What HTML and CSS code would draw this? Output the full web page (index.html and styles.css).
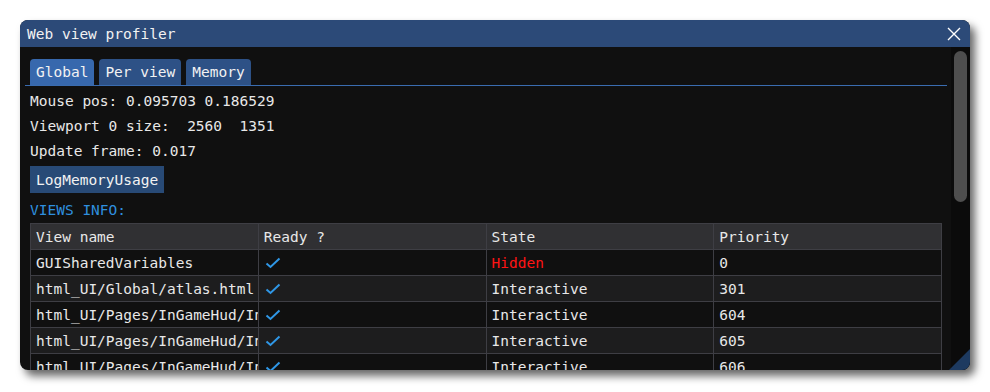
FILE: index.html
```html
<!DOCTYPE html>
<html>
<head>
    <meta charset="utf-8">
    <title> Web view profiler </title>

    <!-- Styling -->
    <link rel="stylesheet" href="styles.css">
</head>
<body>
    <div class="window">
        <div class="titlebar">
            <span class="title">Web view profiler</span>
            <svg class="close" width="14" height="14" viewBox="0 0 14 14">
                <path d="M1 1 L13 13 M13 1 L1 13" stroke="#ffffff" stroke-width="1.4" fill="none"/>
            </svg>
        </div>

        <div class="body">
            <div class="main">
                <div class="tabbar">
                    <span class="tab active">Global</span>
                    <span class="tab">Per view</span>
                    <span class="tab">Memory</span>
                </div>

                <p class="line">Mouse pos: 0.095703 0.186529</p>
                <p class="line">Viewport 0 size:  2560  1351</p>
                <p class="line">Update frame: 0.017</p>
                <button class="btn">LogMemoryUsage</button>
                <p class="line heading">VIEWS INFO:</p>

                <table class="views">
                    <colgroup>
                        <col class="c1"><col class="c2"><col class="c3"><col class="c4">
                    </colgroup>
                    <thead>
                        <tr><th>View name</th><th>Ready ?</th><th>State</th><th>Priority</th></tr>
                    </thead>
                    <tbody>
                        <tr><td>GUISharedVariables</td><td class="ok"><svg class="check" width="16" height="12" viewBox="0 0 16 12"><path d="M1.5 6.5 L5.5 10 L14.5 1.5" stroke="#2f97e6" stroke-width="2" fill="none"/></svg></td><td class="hidden">Hidden</td><td>0</td></tr>
                        <tr><td>html_UI/Global/atlas.html</td><td class="ok"><svg class="check" width="16" height="12" viewBox="0 0 16 12"><path d="M1.5 6.5 L5.5 10 L14.5 1.5" stroke="#2f97e6" stroke-width="2" fill="none"/></svg></td><td>Interactive</td><td>301</td></tr>
                        <tr><td>html_UI/Pages/InGameHud/InGameHud.html</td><td class="ok"><svg class="check" width="16" height="12" viewBox="0 0 16 12"><path d="M1.5 6.5 L5.5 10 L14.5 1.5" stroke="#2f97e6" stroke-width="2" fill="none"/></svg></td><td>Interactive</td><td>604</td></tr>
                        <tr><td>html_UI/Pages/InGameHud/InGameHud.html</td><td class="ok"><svg class="check" width="16" height="12" viewBox="0 0 16 12"><path d="M1.5 6.5 L5.5 10 L14.5 1.5" stroke="#2f97e6" stroke-width="2" fill="none"/></svg></td><td>Interactive</td><td>605</td></tr>
                        <tr><td>html_UI/Pages/InGameHud/InGameHud.html</td><td class="ok"><svg class="check" width="16" height="12" viewBox="0 0 16 12"><path d="M1.5 6.5 L5.5 10 L14.5 1.5" stroke="#2f97e6" stroke-width="2" fill="none"/></svg></td><td>Interactive</td><td>606</td></tr>
                    </tbody>
                </table>
            </div>

            <div class="scrollbar">
                <div class="thumb"></div>
            </div>
        </div>

        <div class="grip"></div>
    </div>
</body>
</html>
```

FILE: styles.css
```css
* {
    box-sizing: border-box;
    font-family: "DejaVu Sans Mono", "Liberation Mono", monospace;
}

:root {
    --white:      #e8e8e8;
    --window:     #101010;
    --title:      #2c4a78;
    --tab:        #2d5186;
    --tab-active: #3768ad;
    --line-blue:  #3a6cb0;
    --sky:        #2f8fdf;
    --red:        #ff1414;
    --grid:       #3e3e44;
    --header:     #303033;
    --stripe:     #1d1d1e;
    --thumb:      #4e4e4e;
}

body {
    margin: 0;
    padding: 20px;
    background-color: #ffffff;
}

.window {
    position: relative;
    width: 950px;
    height: 350px;
    overflow: hidden;

    display: flex;
    flex-direction: column;

    color: var( --white );
    background-color: var( --window );
    border-radius: 8px;
    box-shadow: 5px 6px 9px rgba( 0, 0, 0, 0.6 );
}

.titlebar {
    height: 27px;
    flex: none;

    display: flex;
    align-items: center;
    justify-content: space-between;

    padding: 0 9px 0 7px;
    background-color: var( --title );
}

.title {
    font-size: 14.5px;
    color: #f2f2f2;
}

.body {
    flex: 1;
    min-height: 0;

    display: flex;
}

.main {
    flex: 1;
    min-width: 0;
    padding: 12px 4px 0 5px;
}

.tabbar {
    display: flex;
    gap: 5px;

    height: 27px;
    padding-left: 5px;
    border-bottom: 1px solid var( --line-blue );
}

.tab {
    height: 26px;
    padding: 0 6px;

    display: flex;
    align-items: center;

    font-size: 14.5px;
    color: #f2f2f2;
    background-color: var( --tab );
    border-radius: 4px 4px 0 0;
}

.tab.active {
    background-color: var( --tab-active );
}

.line {
    margin: 0;
    padding-left: 5px;

    height: 25px;
    line-height: 25px;
    font-size: 14.5px;
    white-space: pre;
}

.tabbar + .line {
    margin-top: 3px;
}

.heading {
    color: var( --sky );
}

.btn {
    display: block;
    height: 27px;
    margin: 2px 0 5px 5px;
    padding: 0 6px;

    font-size: 14.5px;
    color: #f2f2f2;
    background-color: #284a76;
    border: none;
}

.views {
    width: 912px;
    margin: 0 0 0 5px;

    table-layout: fixed;
    border-collapse: collapse;
    font-size: 14.5px;
}

.views th, .views td {
    height: 26px;
    padding: 0 5px;

    text-align: left;
    font-weight: normal;
    white-space: nowrap;
    overflow: hidden;
    text-overflow: clip;

    border: 1px solid var( --grid );
}

.views th {
    background-color: var( --header );
}

.views tbody tr:nth-child(even) {
    background-color: var( --stripe );
}

.views .ok {
    padding-left: 6px;
}

.check {
    display: block;
}

.hidden {
    color: var( --red );
}

.scrollbar {
    width: 19px;
    flex: none;
    padding: 4px 3px 0 3px;
    background-color: #0b0b0b;
}

.thumb {
    height: 151px;
    background-color: var( --thumb );
    border-radius: 7px;
}

/* resize grip in the lower right corner */
.grip {
    position: absolute;
    right: 0;
    bottom: 0;
    width: 21px;
    height: 21px;

    background-color: #1d3a60;
    clip-path: polygon( 100% 0, 100% 100%, 0 100% );
}
```
